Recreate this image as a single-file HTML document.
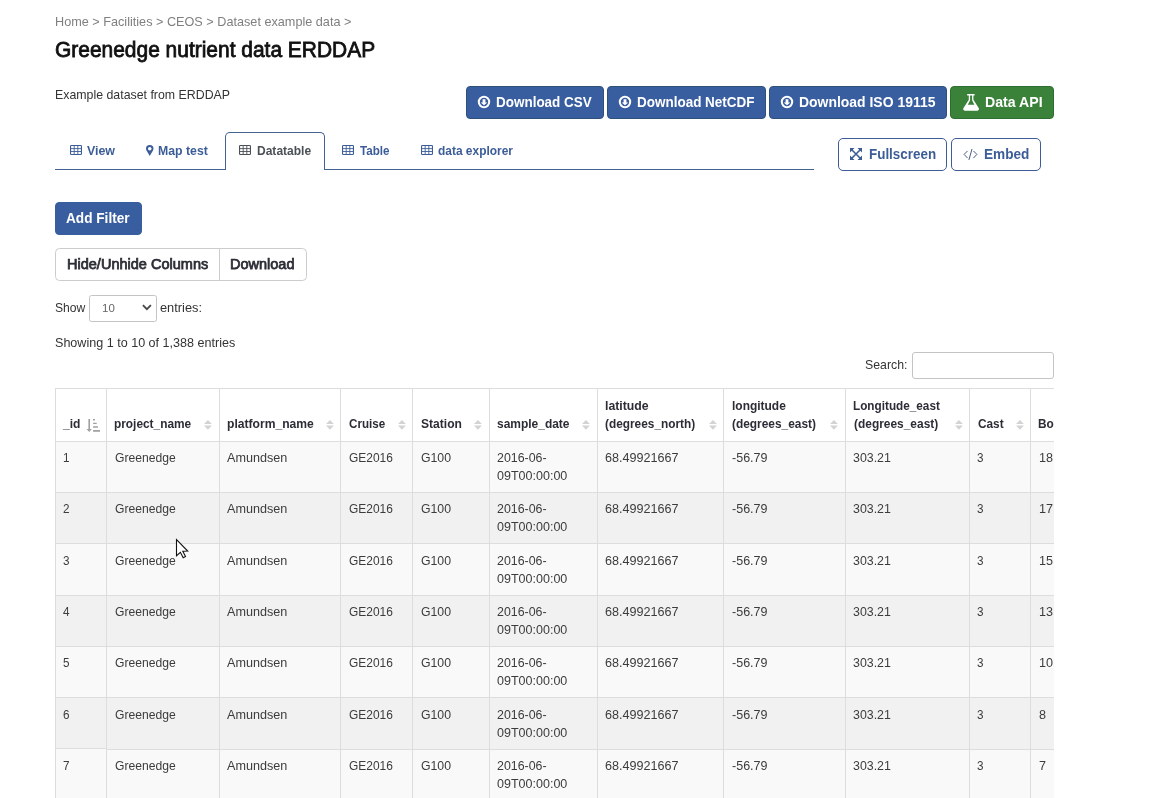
<!DOCTYPE html>
<html lang="en"><head><meta charset="utf-8"><title>Greenedge nutrient data ERDDAP</title>
<style>
*{box-sizing:border-box;margin:0;padding:0}
html,body{width:1162px;height:798px;overflow:hidden;background:#fff}
body{font-family:"Liberation Sans",Arial,sans-serif;font-size:12.6px;color:#333;position:relative}
.t{position:absolute;white-space:nowrap;line-height:30px;font-weight:normal;display:block;transform-origin:0 0}
.page{position:absolute;left:0;top:0;width:1162px;height:798px;will-change:transform}
.a{position:absolute}
.btn{position:absolute;border-radius:4px;border:1px solid #2e5179;background:#395ea0}
.btn.g{background:#3a823a;border-color:#2f6e31}
.btn.o{background:#fff;border-color:#3c5d97;border-radius:5px}
.btn.l{background:#fff;border-color:#ccc}
.tabline{left:55px;top:168.9px;width:759px;height:1.1px;background:#44628f}
.tabact{left:225.1px;top:132.1px;width:100px;height:38px;border:1.1px solid #44628f;border-bottom:none;border-radius:5px 5px 0 0;background:#fff}
.sel{left:89.3px;top:295.3px;width:67.7px;height:26.4px;border:1px solid #c4c4c4;border-radius:2.500px;background:#fff}
.inp{left:912.4px;top:352.4px;width:141.4px;height:26.2px;border:1px solid #c4c4c4;border-radius:3px;background:#fff}
.tbl{left:0;top:380px;width:1053.8px;height:418px;overflow:hidden}
.tbl>*{margin-top:-380px}
.hl{position:absolute;height:1px;background:#ddd;left:55px;width:1010px}
.vl{position:absolute;width:1px;background:#ddd;top:388px;height:420px}
.row{position:absolute;left:55px;width:1010px}
.row.o{background:#f9f9f9}
.row.e{background:#f1f1f1}
svg{position:absolute;overflow:visible}
</style></head>
<body>
<main class="page">
<nav><span class="t" style="left:54.65px;top:7px;font-size:12.6px;color:#7f7f7f;transform:scaleX(1.0057);">Home &gt; Facilities &gt; CEOS &gt; Dataset example data &gt;</span></nav>
<h1><span class="t" style="left:55.49px;top:35px;font-size:21.6px;color:#111;transform:scaleX(0.9698);-webkit-text-stroke:0.8px #111;">Greenedge nutrient data ERDDAP</span></h1>
<p><span class="t" style="left:54.68px;top:80px;font-size:12.6px;color:#333;transform:scaleX(0.9807);">Example dataset from ERDDAP</span></p>
<a class="w"><div class="btn" style="left:466px;top:86px;width:137.9px;height:32.900px"></div><svg style="left:477.1px;top:95.0px" width="14" height="14" viewBox="-7 -7 14 14"><circle cx="0" cy="0" r="5.200" fill="none" stroke="#fff" stroke-width="2"/><path d="M-1.400 -2.800h2.800v3.200h1.900L0 3.300 -3.300 0.400h1.900z" fill="#fff"/></svg><span class="t" style="left:495.76px;top:87px;font-size:14.4px;color:#fff;transform:scaleX(0.9359);font-weight:bold;">Download CSV</span></a>
<a class="w"><div class="btn" style="left:607.1px;top:86px;width:158.8px;height:32.900px"></div><svg style="left:617.7px;top:95.0px" width="14" height="14" viewBox="-7 -7 14 14"><circle cx="0" cy="0" r="5.200" fill="none" stroke="#fff" stroke-width="2"/><path d="M-1.400 -2.800h2.800v3.200h1.900L0 3.300 -3.300 0.400h1.900z" fill="#fff"/></svg><span class="t" style="left:636.96px;top:87px;font-size:14.4px;color:#fff;transform:scaleX(0.9363);font-weight:bold;">Download NetCDF</span></a>
<a class="w"><div class="btn" style="left:769.1px;top:86px;width:177.6px;height:32.900px"></div><svg style="left:780.3px;top:95.0px" width="14" height="14" viewBox="-7 -7 14 14"><circle cx="0" cy="0" r="5.200" fill="none" stroke="#fff" stroke-width="2"/><path d="M-1.400 -2.800h2.800v3.200h1.900L0 3.300 -3.300 0.400h1.900z" fill="#fff"/></svg><span class="t" style="left:798.73px;top:87px;font-size:14.4px;color:#fff;transform:scaleX(0.9690);font-weight:bold;">Download ISO 19115</span></a>
<a class="w"><div class="btn g" style="left:950px;top:86px;width:104px;height:32.900px"></div><svg style="left:962.7px;top:94px" width="16.200" height="16.700" viewBox="0 0 16.200 16.700"><path d="M4.200 0h7.400v1.500h-1.200v4.200l5.300 8.400c0.700 1.200 0.100 2.600-1.300 2.600H1.800c-1.400 0-2-1.400-1.300-2.600l5.300-8.400V1.500H4.200z" fill="#fff"/><path d="M7.100 1.500h2v4.700l2.300 4.600H4.800l2.300-4.600z" fill="#3a823a"/></svg><span class="t" style="left:984.72px;top:87px;font-size:14.4px;color:#fff;transform:scaleX(0.9814);font-weight:bold;">Data API</span></a>
<div class="a tabline"></div><div class="a tabact"></div>
<svg style="left:69.8px;top:145.1px" width="12" height="10" viewBox="0 0 12 10"><rect x="0.550" y="0.550" width="10.900" height="8.900" rx="0.800" fill="none" stroke="#3c5d97" stroke-width="1.100"/><path d="M0.500 3.600h11M0.500 6.500h11M4.200 0.500v9M7.800 0.500v9" stroke="#3c5d97" stroke-width="0.900" fill="none"/></svg><span class="t" style="left:86.91px;top:136px;font-size:12.6px;color:#3c5d97;transform:scaleX(0.9838);font-weight:bold;">View</span>
<svg style="left:145.7px;top:144.8px" width="7.500" height="11.100" viewBox="0 0 7.500 11.100"><path d="M3.750 0A3.750 3.750 0 0 0 0 3.750C0 5.700 2.100 7.600 3.750 11.100 5.400 7.600 7.500 5.700 7.500 3.750A3.750 3.750 0 0 0 3.750 0zM3.750 1.900a1.800 1.800 0 1 1 0 3.600 1.800 1.800 0 0 1 0-3.600z" fill="#3c5d97" fill-rule="evenodd"/></svg><span class="t" style="left:158.28px;top:136px;font-size:12.6px;color:#3c5d97;transform:scaleX(0.9757);font-weight:bold;">Map test</span>
<svg style="left:239.4px;top:145.1px" width="12" height="10" viewBox="0 0 12 10"><rect x="0.550" y="0.550" width="10.900" height="8.900" rx="0.800" fill="none" stroke="#4b5056" stroke-width="1.100"/><path d="M0.500 3.600h11M0.500 6.500h11M4.200 0.500v9M7.800 0.500v9" stroke="#4b5056" stroke-width="0.900" fill="none"/></svg><span class="t" style="left:256.59px;top:136px;font-size:12.6px;color:#4b5056;transform:scaleX(0.9548);font-weight:bold;">Datatable</span>
<svg style="left:342.2px;top:145.1px" width="12" height="10" viewBox="0 0 12 10"><rect x="0.550" y="0.550" width="10.900" height="8.900" rx="0.800" fill="none" stroke="#3c5d97" stroke-width="1.100"/><path d="M0.500 3.600h11M0.500 6.500h11M4.200 0.500v9M7.800 0.500v9" stroke="#3c5d97" stroke-width="0.900" fill="none"/></svg><span class="t" style="left:360.15px;top:136px;font-size:12.6px;color:#3c5d97;transform:scaleX(0.9258);font-weight:bold;">Table</span>
<svg style="left:420.7px;top:145.1px" width="12" height="10" viewBox="0 0 12 10"><rect x="0.550" y="0.550" width="10.900" height="8.900" rx="0.800" fill="none" stroke="#3c5d97" stroke-width="1.100"/><path d="M0.500 3.600h11M0.500 6.500h11M4.200 0.500v9M7.800 0.500v9" stroke="#3c5d97" stroke-width="0.900" fill="none"/></svg><span class="t" style="left:438.08px;top:136px;font-size:12.6px;color:#3c5d97;transform:scaleX(0.9482);font-weight:bold;">data explorer</span>
<div class="btn o" style="left:838px;top:138px;width:109px;height:33px"></div><svg style="left:850px;top:148px" width="12" height="12" viewBox="0 0 12 12"><path d="M0 0h4.500L0 4.500zM12 0v4.500L7.500 0zM0 12V7.500L4.500 12zM12 12H7.500L12 7.500z" fill="#3c5d97"/><path d="M1.500 1.500l9 9M10.500 1.500l-9 9" stroke="#3c5d97" stroke-width="1.600" fill="none"/></svg><span class="t" style="left:868.67px;top:139px;font-size:14.4px;color:#3c5d97;transform:scaleX(0.9324);font-weight:bold;">Fullscreen</span>
<div class="btn o" style="left:951px;top:138px;width:90px;height:33px"></div><svg style="left:962.500px;top:149px" width="15" height="11" viewBox="0 0 15 11"><path d="M4.300 2.200L1.100 5.400l3.200 3.400M10.700 2.200l3.200 3.200-3.200 3.400M8.900 0.400L6 10.600" fill="none" stroke="#4d5d7e" stroke-width="1" stroke-linecap="round" stroke-linejoin="round"/></svg><span class="t" style="left:983.75px;top:139px;font-size:14.4px;color:#3c5d97;transform:scaleX(0.9465);font-weight:bold;">Embed</span>
<div class="btn" style="left:55px;top:201.900px;width:86.900px;height:32.800px;border-color:#395ea0"></div><span class="t" style="left:66.38px;top:203px;font-size:14.4px;color:#fff;transform:scaleX(0.9472);font-weight:bold;">Add Filter</span>
<div class="btn l" style="left:54.900px;top:247.800px;width:165.100px;height:33.100px;border-radius:4.500px 0 0 4.500px"></div><span class="t" style="left:66.78px;top:249px;font-size:14.4px;color:#2c2d36;transform:scaleX(1.0092);-webkit-text-stroke:0.75px #2c2d36;">Hide/Unhide Columns</span>
<div class="btn l" style="left:219px;top:247.800px;width:88.300px;height:33.100px;border-radius:0 4.500px 4.500px 0"></div><span class="t" style="left:230.48px;top:249px;font-size:14.4px;color:#2c2d36;transform:scaleX(1.0077);-webkit-text-stroke:0.75px #2c2d36;">Download</span>
<span class="t" style="left:55.06px;top:293px;font-size:12.6px;color:#333;transform:scaleX(0.9637);">Show</span><div class="a sel"></div><span class="t" style="left:101.79px;top:293px;font-size:11.2px;color:#666;transform:scaleX(1.0262);">10</span><svg style="left:142.100px;top:304.400px" width="9.800" height="7" viewBox="0 0 9.800 7"><path d="M0.900 1.200l4 4 4-4" fill="none" stroke="#484848" stroke-width="1.800"/></svg><span class="t" style="left:159.92px;top:293px;font-size:12.6px;color:#333;transform:scaleX(1.0171);">entries:</span>
<span class="t" style="left:55.02px;top:328px;font-size:12.6px;color:#333;transform:scaleX(0.9978);">Showing 1 to 10 of 1,388 entries</span>
<span class="t" style="left:864.84px;top:350px;font-size:12.6px;color:#333;transform:scaleX(0.9768);">Search:</span><div class="a inp"></div>
<div class="a tbl">
<div class="row o" style="top:441.3px;height:51.3px"></div>
<div class="row e" style="top:492.6px;height:51.3px"></div>
<div class="row o" style="top:543.9px;height:51.3px"></div>
<div class="row e" style="top:595.2px;height:51.3px"></div>
<div class="row o" style="top:646.5px;height:51.3px"></div>
<div class="row e" style="top:697.8px;height:51.3px"></div>
<div class="row o" style="top:749.1px;height:51.3px"></div>
<div class="hl" style="top:387.800px"></div>
<div class="hl" style="top:440.8px"></div>
<div class="hl" style="top:492.1px"></div>
<div class="hl" style="top:543.4px"></div>
<div class="hl" style="top:594.7px"></div>
<div class="hl" style="top:646.0px"></div>
<div class="hl" style="top:697.3px"></div>
<div class="hl" style="top:748.6px"></div>
<div class="hl" style="top:799.9px"></div>
<div class="vl" style="left:54.9px"></div>
<div class="vl" style="left:105.8px"></div>
<div class="vl" style="left:218.9px"></div>
<div class="vl" style="left:340.2px"></div>
<div class="vl" style="left:412.1px"></div>
<div class="vl" style="left:488.9px"></div>
<div class="vl" style="left:596.9px"></div>
<div class="vl" style="left:723.1px"></div>
<div class="vl" style="left:844.9px"></div>
<div class="vl" style="left:969.0px"></div>
<div class="vl" style="left:1029.9px"></div>
<div class="a" style="left:56px;top:748px;width:50px;height:1px;background:#ddd"></div><div class="a" style="left:56px;top:749px;width:50px;height:1px;background:#f9f9f9"></div>
<svg style="left:86px;top:418px" width="15" height="15" viewBox="0 0 15 15"><path d="M2.400 1.100h1.600v10h1.900L3.200 13.900 0.600 11.100h1.800z" fill="#a0a0a0"/><path d="M7.100 1.100h1.900v1.500H7.100zM7.100 4.700h3.600v1.300H7.100zM7.100 8.300h4.800v1.500H7.100zM7.100 12h6.900v1.800H7.100z" fill="#a0a0a0"/></svg>
<svg style="left:204.1px;top:420.300px" width="7.900" height="9.800" viewBox="0 0 7.900 9.800"><path d="M3.950 0L7.900 3.900H0z" fill="#d3d3d3"/><path d="M3.950 9.800L7.900 5.600H0z" fill="#d3d3d3"/></svg><svg style="left:325.8px;top:420.300px" width="7.900" height="9.800" viewBox="0 0 7.900 9.800"><path d="M3.950 0L7.900 3.900H0z" fill="#d3d3d3"/><path d="M3.950 9.800L7.900 5.600H0z" fill="#d3d3d3"/></svg><svg style="left:397.7px;top:420.300px" width="7.900" height="9.800" viewBox="0 0 7.900 9.800"><path d="M3.950 0L7.900 3.900H0z" fill="#d3d3d3"/><path d="M3.950 9.800L7.900 5.600H0z" fill="#d3d3d3"/></svg><svg style="left:474.1px;top:420.300px" width="7.900" height="9.800" viewBox="0 0 7.900 9.800"><path d="M3.950 0L7.900 3.900H0z" fill="#d3d3d3"/><path d="M3.950 9.800L7.900 5.600H0z" fill="#d3d3d3"/></svg><svg style="left:581.9px;top:420.300px" width="7.900" height="9.800" viewBox="0 0 7.900 9.800"><path d="M3.950 0L7.900 3.900H0z" fill="#d3d3d3"/><path d="M3.950 9.800L7.900 5.600H0z" fill="#d3d3d3"/></svg><svg style="left:708.8px;top:420.300px" width="7.900" height="9.800" viewBox="0 0 7.900 9.800"><path d="M3.950 0L7.900 3.900H0z" fill="#d3d3d3"/><path d="M3.950 9.800L7.900 5.600H0z" fill="#d3d3d3"/></svg><svg style="left:830.3px;top:420.300px" width="7.900" height="9.800" viewBox="0 0 7.900 9.800"><path d="M3.950 0L7.900 3.900H0z" fill="#d3d3d3"/><path d="M3.950 9.800L7.900 5.600H0z" fill="#d3d3d3"/></svg><svg style="left:954.6px;top:420.300px" width="7.900" height="9.800" viewBox="0 0 7.900 9.800"><path d="M3.950 0L7.900 3.900H0z" fill="#d3d3d3"/><path d="M3.950 9.800L7.900 5.600H0z" fill="#d3d3d3"/></svg><svg style="left:1015.6px;top:420.300px" width="7.900" height="9.800" viewBox="0 0 7.900 9.800"><path d="M3.950 0L7.900 3.900H0z" fill="#d3d3d3"/><path d="M3.950 9.800L7.900 5.600H0z" fill="#d3d3d3"/></svg>
<span class="t" style="left:62.81px;top:409px;font-size:12.6px;color:#2c2d36;transform:scaleX(0.9579);font-weight:bold;">_id</span><span class="t" style="left:114.29px;top:409px;font-size:12.6px;color:#2c2d36;transform:scaleX(0.9426);font-weight:bold;">project_name</span><span class="t" style="left:226.58px;top:409px;font-size:12.6px;color:#2c2d36;transform:scaleX(0.9620);font-weight:bold;">platform_name</span><span class="t" style="left:348.88px;top:409px;font-size:12.6px;color:#2c2d36;transform:scaleX(0.9222);font-weight:bold;">Cruise</span><span class="t" style="left:420.51px;top:409px;font-size:12.6px;color:#2c2d36;transform:scaleX(0.9594);font-weight:bold;">Station</span><span class="t" style="left:496.94px;top:409px;font-size:12.6px;color:#2c2d36;transform:scaleX(0.9503);font-weight:bold;">sample_date</span><span class="t" style="left:604.54px;top:391px;font-size:12.6px;color:#2c2d36;transform:scaleX(0.9754);font-weight:bold;">latitude</span><span class="t" style="left:605.28px;top:409px;font-size:12.6px;color:#2c2d36;transform:scaleX(0.9406);font-weight:bold;">(degrees_north)</span><span class="t" style="left:731.57px;top:391px;font-size:12.6px;color:#2c2d36;transform:scaleX(0.9500);font-weight:bold;">longitude</span><span class="t" style="left:732.28px;top:409px;font-size:12.6px;color:#2c2d36;transform:scaleX(0.9450);font-weight:bold;">(degrees_east)</span><span class="t" style="left:853.11px;top:391px;font-size:12.6px;color:#2c2d36;transform:scaleX(0.9330);font-weight:bold;">Longitude_east</span><span class="t" style="left:853.78px;top:409px;font-size:12.6px;color:#2c2d36;transform:scaleX(0.9472);font-weight:bold;">(degrees_east)</span><span class="t" style="left:977.57px;top:409px;font-size:12.6px;color:#2c2d36;transform:scaleX(0.9394);font-weight:bold;">Cast</span><span class="t" style="left:1038.21px;top:409px;font-size:12.6px;color:#2c2d36;transform:scaleX(0.9399);font-weight:bold;">Bottle</span>
<span class="t" style="left:63.07px;top:443px;font-size:12.6px;color:#3c3c3c;transform:scaleX(0.9300);">1</span><span class="t" style="left:114.94px;top:443px;font-size:12.6px;color:#3c3c3c;transform:scaleX(0.9643);">Greenedge</span><span class="t" style="left:227.45px;top:443px;font-size:12.6px;color:#3c3c3c;transform:scaleX(1.0020);">Amundsen</span><span class="t" style="left:348.85px;top:443px;font-size:12.6px;color:#3c3c3c;transform:scaleX(0.9482);">GE2016</span><span class="t" style="left:420.54px;top:443px;font-size:12.6px;color:#3c3c3c;transform:scaleX(0.9745);">G100</span><span class="t" style="left:496.75px;top:443px;font-size:12.6px;color:#3c3c3c;transform:scaleX(0.9830);">2016-06-</span><span class="t" style="left:496.88px;top:461px;font-size:12.6px;color:#3c3c3c;transform:scaleX(0.9941);">09T00:00:00</span><span class="t" style="left:605.22px;top:443px;font-size:12.6px;color:#3c3c3c;transform:scaleX(1.0003);">68.49921667</span><span class="t" style="left:731.50px;top:443px;font-size:12.6px;color:#3c3c3c;transform:scaleX(0.9939);">-56.79</span><span class="t" style="left:853.18px;top:443px;font-size:12.6px;color:#3c3c3c;transform:scaleX(0.9828);">303.21</span><span class="t" style="left:977.22px;top:443px;font-size:12.6px;color:#3c3c3c;transform:scaleX(0.9300);">3</span><span class="t" style="left:1038.70px;top:443px;font-size:12.6px;color:#3c3c3c;transform:scaleX(1.0003);">18</span>
<span class="t" style="left:63.07px;top:494px;font-size:12.6px;color:#3c3c3c;transform:scaleX(0.9300);">2</span><span class="t" style="left:114.94px;top:494px;font-size:12.6px;color:#3c3c3c;transform:scaleX(0.9643);">Greenedge</span><span class="t" style="left:227.45px;top:494px;font-size:12.6px;color:#3c3c3c;transform:scaleX(1.0020);">Amundsen</span><span class="t" style="left:348.85px;top:494px;font-size:12.6px;color:#3c3c3c;transform:scaleX(0.9482);">GE2016</span><span class="t" style="left:420.54px;top:494px;font-size:12.6px;color:#3c3c3c;transform:scaleX(0.9745);">G100</span><span class="t" style="left:496.75px;top:494px;font-size:12.6px;color:#3c3c3c;transform:scaleX(0.9830);">2016-06-</span><span class="t" style="left:496.88px;top:512px;font-size:12.6px;color:#3c3c3c;transform:scaleX(0.9941);">09T00:00:00</span><span class="t" style="left:605.22px;top:494px;font-size:12.6px;color:#3c3c3c;transform:scaleX(1.0003);">68.49921667</span><span class="t" style="left:731.50px;top:494px;font-size:12.6px;color:#3c3c3c;transform:scaleX(0.9939);">-56.79</span><span class="t" style="left:853.18px;top:494px;font-size:12.6px;color:#3c3c3c;transform:scaleX(0.9828);">303.21</span><span class="t" style="left:977.22px;top:494px;font-size:12.6px;color:#3c3c3c;transform:scaleX(0.9300);">3</span><span class="t" style="left:1038.70px;top:494px;font-size:12.6px;color:#3c3c3c;transform:scaleX(1.0003);">17</span>
<span class="t" style="left:63.07px;top:546px;font-size:12.6px;color:#3c3c3c;transform:scaleX(0.9300);">3</span><span class="t" style="left:114.94px;top:546px;font-size:12.6px;color:#3c3c3c;transform:scaleX(0.9643);">Greenedge</span><span class="t" style="left:227.45px;top:546px;font-size:12.6px;color:#3c3c3c;transform:scaleX(1.0020);">Amundsen</span><span class="t" style="left:348.85px;top:546px;font-size:12.6px;color:#3c3c3c;transform:scaleX(0.9482);">GE2016</span><span class="t" style="left:420.54px;top:546px;font-size:12.6px;color:#3c3c3c;transform:scaleX(0.9745);">G100</span><span class="t" style="left:496.75px;top:546px;font-size:12.6px;color:#3c3c3c;transform:scaleX(0.9830);">2016-06-</span><span class="t" style="left:496.88px;top:564px;font-size:12.6px;color:#3c3c3c;transform:scaleX(0.9941);">09T00:00:00</span><span class="t" style="left:605.22px;top:546px;font-size:12.6px;color:#3c3c3c;transform:scaleX(1.0003);">68.49921667</span><span class="t" style="left:731.50px;top:546px;font-size:12.6px;color:#3c3c3c;transform:scaleX(0.9939);">-56.79</span><span class="t" style="left:853.18px;top:546px;font-size:12.6px;color:#3c3c3c;transform:scaleX(0.9828);">303.21</span><span class="t" style="left:977.22px;top:546px;font-size:12.6px;color:#3c3c3c;transform:scaleX(0.9300);">3</span><span class="t" style="left:1038.70px;top:546px;font-size:12.6px;color:#3c3c3c;transform:scaleX(1.0003);">15</span>
<span class="t" style="left:63.07px;top:597px;font-size:12.6px;color:#3c3c3c;transform:scaleX(0.9300);">4</span><span class="t" style="left:114.94px;top:597px;font-size:12.6px;color:#3c3c3c;transform:scaleX(0.9643);">Greenedge</span><span class="t" style="left:227.45px;top:597px;font-size:12.6px;color:#3c3c3c;transform:scaleX(1.0020);">Amundsen</span><span class="t" style="left:348.85px;top:597px;font-size:12.6px;color:#3c3c3c;transform:scaleX(0.9482);">GE2016</span><span class="t" style="left:420.54px;top:597px;font-size:12.6px;color:#3c3c3c;transform:scaleX(0.9745);">G100</span><span class="t" style="left:496.75px;top:597px;font-size:12.6px;color:#3c3c3c;transform:scaleX(0.9830);">2016-06-</span><span class="t" style="left:496.88px;top:615px;font-size:12.6px;color:#3c3c3c;transform:scaleX(0.9941);">09T00:00:00</span><span class="t" style="left:605.22px;top:597px;font-size:12.6px;color:#3c3c3c;transform:scaleX(1.0003);">68.49921667</span><span class="t" style="left:731.50px;top:597px;font-size:12.6px;color:#3c3c3c;transform:scaleX(0.9939);">-56.79</span><span class="t" style="left:853.18px;top:597px;font-size:12.6px;color:#3c3c3c;transform:scaleX(0.9828);">303.21</span><span class="t" style="left:977.22px;top:597px;font-size:12.6px;color:#3c3c3c;transform:scaleX(0.9300);">3</span><span class="t" style="left:1038.70px;top:597px;font-size:12.6px;color:#3c3c3c;transform:scaleX(1.0003);">13</span>
<span class="t" style="left:63.07px;top:648px;font-size:12.6px;color:#3c3c3c;transform:scaleX(0.9300);">5</span><span class="t" style="left:114.94px;top:648px;font-size:12.6px;color:#3c3c3c;transform:scaleX(0.9643);">Greenedge</span><span class="t" style="left:227.45px;top:648px;font-size:12.6px;color:#3c3c3c;transform:scaleX(1.0020);">Amundsen</span><span class="t" style="left:348.85px;top:648px;font-size:12.6px;color:#3c3c3c;transform:scaleX(0.9482);">GE2016</span><span class="t" style="left:420.54px;top:648px;font-size:12.6px;color:#3c3c3c;transform:scaleX(0.9745);">G100</span><span class="t" style="left:496.75px;top:648px;font-size:12.6px;color:#3c3c3c;transform:scaleX(0.9830);">2016-06-</span><span class="t" style="left:496.88px;top:666px;font-size:12.6px;color:#3c3c3c;transform:scaleX(0.9941);">09T00:00:00</span><span class="t" style="left:605.22px;top:648px;font-size:12.6px;color:#3c3c3c;transform:scaleX(1.0003);">68.49921667</span><span class="t" style="left:731.50px;top:648px;font-size:12.6px;color:#3c3c3c;transform:scaleX(0.9939);">-56.79</span><span class="t" style="left:853.18px;top:648px;font-size:12.6px;color:#3c3c3c;transform:scaleX(0.9828);">303.21</span><span class="t" style="left:977.22px;top:648px;font-size:12.6px;color:#3c3c3c;transform:scaleX(0.9300);">3</span><span class="t" style="left:1038.70px;top:648px;font-size:12.6px;color:#3c3c3c;transform:scaleX(1.0003);">10</span>
<span class="t" style="left:63.07px;top:700px;font-size:12.6px;color:#3c3c3c;transform:scaleX(0.9300);">6</span><span class="t" style="left:114.94px;top:700px;font-size:12.6px;color:#3c3c3c;transform:scaleX(0.9643);">Greenedge</span><span class="t" style="left:227.45px;top:700px;font-size:12.6px;color:#3c3c3c;transform:scaleX(1.0020);">Amundsen</span><span class="t" style="left:348.85px;top:700px;font-size:12.6px;color:#3c3c3c;transform:scaleX(0.9482);">GE2016</span><span class="t" style="left:420.54px;top:700px;font-size:12.6px;color:#3c3c3c;transform:scaleX(0.9745);">G100</span><span class="t" style="left:496.75px;top:700px;font-size:12.6px;color:#3c3c3c;transform:scaleX(0.9830);">2016-06-</span><span class="t" style="left:496.88px;top:718px;font-size:12.6px;color:#3c3c3c;transform:scaleX(0.9941);">09T00:00:00</span><span class="t" style="left:605.22px;top:700px;font-size:12.6px;color:#3c3c3c;transform:scaleX(1.0003);">68.49921667</span><span class="t" style="left:731.50px;top:700px;font-size:12.6px;color:#3c3c3c;transform:scaleX(0.9939);">-56.79</span><span class="t" style="left:853.18px;top:700px;font-size:12.6px;color:#3c3c3c;transform:scaleX(0.9828);">303.21</span><span class="t" style="left:977.22px;top:700px;font-size:12.6px;color:#3c3c3c;transform:scaleX(0.9300);">3</span><span class="t" style="left:1038.70px;top:700px;font-size:12.6px;color:#3c3c3c;transform:scaleX(1.0003);">8</span>
<span class="t" style="left:63.07px;top:751px;font-size:12.6px;color:#3c3c3c;transform:scaleX(0.9300);">7</span><span class="t" style="left:114.94px;top:751px;font-size:12.6px;color:#3c3c3c;transform:scaleX(0.9643);">Greenedge</span><span class="t" style="left:227.45px;top:751px;font-size:12.6px;color:#3c3c3c;transform:scaleX(1.0020);">Amundsen</span><span class="t" style="left:348.85px;top:751px;font-size:12.6px;color:#3c3c3c;transform:scaleX(0.9482);">GE2016</span><span class="t" style="left:420.54px;top:751px;font-size:12.6px;color:#3c3c3c;transform:scaleX(0.9745);">G100</span><span class="t" style="left:496.75px;top:751px;font-size:12.6px;color:#3c3c3c;transform:scaleX(0.9830);">2016-06-</span><span class="t" style="left:496.88px;top:769px;font-size:12.6px;color:#3c3c3c;transform:scaleX(0.9941);">09T00:00:00</span><span class="t" style="left:605.22px;top:751px;font-size:12.6px;color:#3c3c3c;transform:scaleX(1.0003);">68.49921667</span><span class="t" style="left:731.50px;top:751px;font-size:12.6px;color:#3c3c3c;transform:scaleX(0.9939);">-56.79</span><span class="t" style="left:853.18px;top:751px;font-size:12.6px;color:#3c3c3c;transform:scaleX(0.9828);">303.21</span><span class="t" style="left:977.22px;top:751px;font-size:12.6px;color:#3c3c3c;transform:scaleX(0.9300);">3</span><span class="t" style="left:1038.70px;top:751px;font-size:12.6px;color:#3c3c3c;transform:scaleX(1.0003);">7</span>
</div>
<svg style="left:176px;top:539px" width="13" height="20" viewBox="0 0 13 20"><path d="M0.500 0.700V16.700L4.400 13.300 7.200 18.700 9.500 17.600 6.800 12.300 11.700 12z" fill="#fff" stroke="#111" stroke-width="1.100" stroke-linejoin="miter"/></svg>
</main>
</body></html>
